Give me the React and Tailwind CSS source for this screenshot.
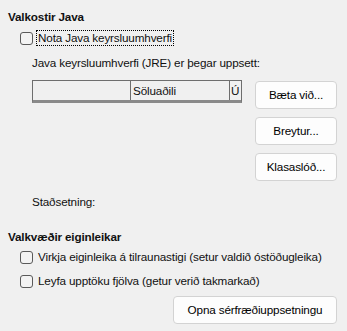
function CheckRow({ label, focused }) {
  return (
    <div className="flex items-center h-[16px] pl-[12px] whitespace-nowrap">
      <span className="w-[13px] h-[13px] rounded-[3px] border border-[#5a5a5a] bg-[#f3f3f3] shrink-0" />
      <span
        className={`ml-[4px] px-[1px] leading-[14px] ${
          focused ? 'outline outline-1 outline-dotted outline-black' : ''
        }`}
      >
        {label}
      </span>
    </div>
  )
}

function Btn({ children, className = '' }) {
  return (
    <button
      className={`h-[28px] rounded-[4px] border border-[#d3d3d3] bg-[#fdfdfd] text-black whitespace-nowrap ${className}`}
    >
      {children}
    </button>
  )
}

export default function App() {
  return (
    <div className="w-[347px] h-[331px] bg-[#f0f0f0] text-[11.7px] tracking-[-0.15px] leading-[16px] text-[#111] font-['Segoe_UI','Liberation_Sans',sans-serif] overflow-hidden pt-[9px] pl-[8px] pr-[10px]">
      <div className="h-[16px] font-bold">Valkostir Java</div>

      <div className="mt-[5px]">
        <CheckRow label="Nota Java keyrsluumhverfi" focused />
      </div>

      <div className="pl-[24px]">
        <div className="mt-[9px] h-[16px] whitespace-nowrap">Java keyrsluumhverfi (JRE) er þegar uppsett:</div>

        <div className="mt-[9px] flex items-start">
          <div className="w-[210px] h-[23px] border border-[#6e6e6e] border-b-[3px] border-b-[#8a8a8a] bg-[#f0f0f0] flex">
            <div className="w-[98px] border-r border-[#6e6e6e]" />
            <div className="w-[99px] border-r border-[#6e6e6e] pl-[2px] leading-[19px]">Söluaðili</div>
            <div className="flex-1 pl-[1px] leading-[19px] overflow-hidden">Ú</div>
          </div>

          <div className="ml-auto mt-[1px] flex flex-col gap-[8px] w-[82px]">
            <Btn>Bæta við...</Btn>
            <Btn>Breytur...</Btn>
            <Btn>Klasaslóð...</Btn>
          </div>
        </div>

        <div className="mt-[13px] h-[16px]">Staðsetning:</div>
      </div>

      <div className="mt-[19px] h-[16px] font-bold">Valkvæðir eiginleikar</div>

      <div className="mt-[4px]">
        <CheckRow label="Virkja eiginleika á tilraunastigi (setur valdið óstöðugleika)" />
      </div>
      <div className="mt-[8px]">
        <CheckRow label="Leyfa upptöku fjölva (getur verið takmarkað)" />
      </div>

      <div className="mt-[7px] flex justify-end">
        <Btn className="w-[164px]">Opna sérfræðiuppsetningu</Btn>
      </div>
    </div>
  )
}
